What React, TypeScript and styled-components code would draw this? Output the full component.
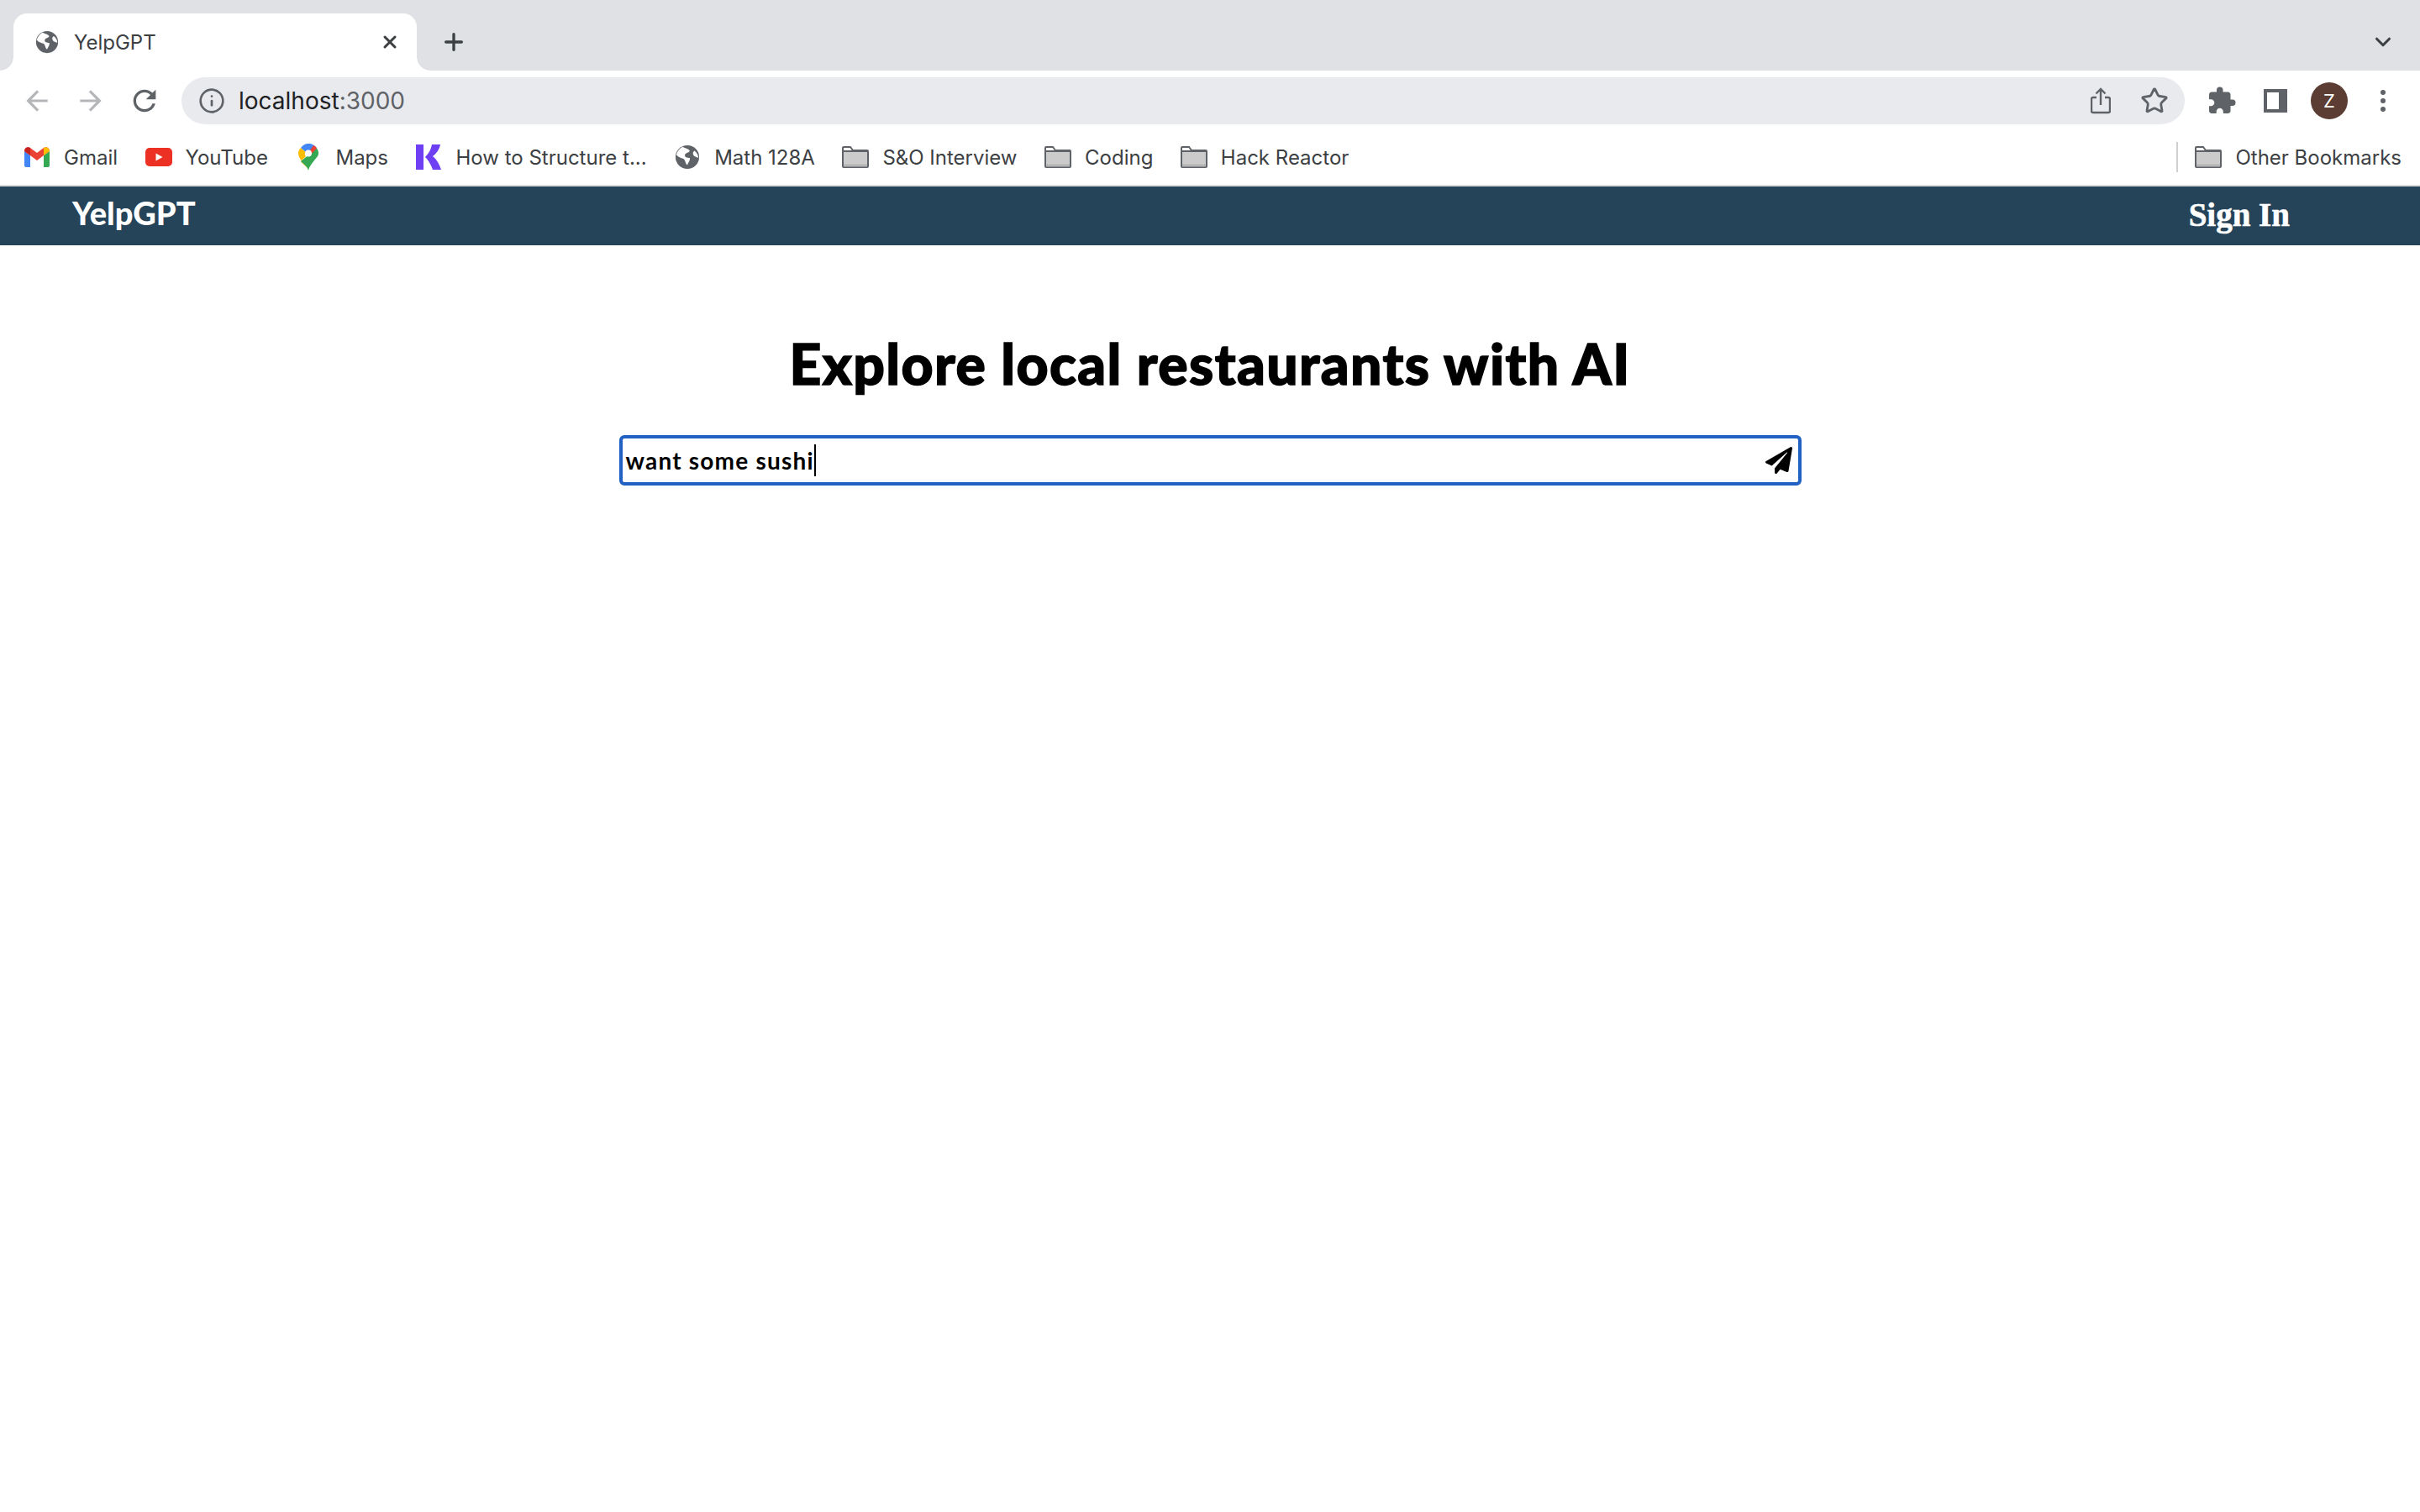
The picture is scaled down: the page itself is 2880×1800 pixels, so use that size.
import React from 'react';
import styled, { createGlobalStyle } from 'styled-components';
import { FaPaperPlane } from 'react-icons/fa';
import { LuInfo, LuStar, LuPlus, LuX, LuChevronDown } from 'react-icons/lu';
import { MdArrowBack, MdArrowForward, MdExtension, MdRefresh } from 'react-icons/md';

const GlobalStyle = createGlobalStyle`
  html, body {
    margin: 0;
    padding: 0;
    background: #ffffff;
  }
`;

const GlobeIcon: React.FC<{ size: number }> = ({ size }) => (
  <svg width={size} height={size} viewBox="0 0 32 32">
    <circle cx="16" cy="16" r="15" fill="#5f6368" />
    <path d="M10 3c3 2 7 2 9 5-1 3-5 2-6 5-1 3 3 4 6 4 1 3-2 6-3 9-3-2-2-6-5-8-3-1-7-2-9-5 1-4 4-8 8-10z" fill="#fff" />
    <path d="M25 8c3 2 5 6 5 9l-5-2c-2-2-3-5 0-7z" fill="#fff" />
  </svg>
);

const GmailIcon = () => (
  <svg width="30" height="24" viewBox="0 0 30 24">
    <path d="M2 24C1 24 0 23 0 22V5l7 5v14z" fill="#4285f4" />
    <path d="M23 24V10l7-5v17c0 1-1 2-2 2z" fill="#34a853" />
    <path d="M0 5c0-4 4-6 7-4l8 6 8-6c3-2 7 0 7 4l-7 5-8 6-8-6z" fill="#ea4335" />
    <path d="M0 5c0-4 4-6 7-4v9z" fill="#c5221f" />
    <path d="M23 1c3-2 7 0 7 4l-7 5z" fill="#fbbc04" />
  </svg>
);

const YouTubeIcon = () => (
  <svg width="32" height="22" viewBox="0 0 32 22">
    <rect width="32" height="22" rx="5" fill="#ed3024" />
    <path d="M12.5 6.5l8 4.5-8 4.5z" fill="#fff" />
  </svg>
);

const MapsIcon = () => (
  <svg width="24" height="32" viewBox="0 0 24 32">
    <path d="M12 32C10 25 0 19 0 11.500 0 9 1 7 3 5l6 5c-2 2-1 4 0 5l-6 6c3 4 7 6 9 11z" fill="#fbbc04" />
    <path d="M12 32c1-5 4-8 7-12 2-3 5-5 5-8.500 0-2-.5-4-2-6L3 21c4 4 8 6 9 11z" fill="#34a853" />
    <path d="M3 5l6 5 6-6-3-4C8 0 5 2 3 5z" fill="#4285f4" />
    <path d="M12 0c4 0 8 2 10 5.500L15 12l-6-8c1-2 2-4 3-4z" fill="#4285f4" />
    <path d="M22 5.500L15 13c1-2 0-4-1-5l4-6c2 1 3 2 4 3.500z" fill="#ea4335" />
    <circle cx="12" cy="11.500" r="4" fill="#fff" />
  </svg>
);

const KIcon = () => (
  <svg width="30" height="30" viewBox="0 0 30 30">
    <path d="M0 0h9v30H0zM19 0h10c-1 6-5 11-9 14 5 4 8 10 10 16H20c-2-6-5-11-9-15 4-4 7-9 8-15z" fill="#6e3ff3" />
  </svg>
);

const FolderIcon = () => (
  <svg width="32" height="26" viewBox="0 0 32 26">
    <path d="M1 24V2c0-.6.4-1 1-1h8l3 4h17c.6 0 1 .4 1 1v18c0 .6-.4 1-1 1H2c-.6 0-1-.4-1-1z" fill="#fff" stroke="#5f6368" strokeWidth="2" />
    <path d="M2 7h28v17H2z" fill="#cbcbcb" />
    <path d="M2 6h28" stroke="#5f6368" strokeWidth="2" />
    <path d="M2 21.500h28v3H2z" fill="#b5b5b5" />
  </svg>
);

const ShareIcon = () => (
  <svg width="24" height="32" viewBox="0 0 24 32" fill="none" stroke="#5f6368" strokeWidth="2.400">
    <path d="M7 12H3a2 2 0 0 0-2 2v14a2 2 0 0 0 2 2h18a2 2 0 0 0 2-2V14a2 2 0 0 0-2-2h-4" />
    <path d="M12 21V2M6.500 7.500L12 2l5.500 5.500" />
  </svg>
);

const SidePanelIcon = () => (
  <svg width="28" height="28" viewBox="0 0 28 28">
    <path fillRule="evenodd" d="M0 0h28v28H0zM4 4v20h14V4z" fill="#5f6368" />
  </svg>
);

const bookmarks: { label: string; icon: React.ReactNode }[] = [
  { label: 'Gmail', icon: <GmailIcon /> },
  { label: 'YouTube', icon: <YouTubeIcon /> },
  { label: 'Maps', icon: <MapsIcon /> },
  { label: 'How to Structure t...', icon: <KIcon /> },
  { label: 'Math 128A', icon: <GlobeIcon size={30} /> },
  { label: 'S&O Interview', icon: <FolderIcon /> },
  { label: 'Coding', icon: <FolderIcon /> },
  { label: 'Hack Reactor', icon: <FolderIcon /> },
];

const App: React.FC = () => (
  <Page>
    <GlobalStyle />
    <TabStrip>
      <Tab>
        <GlobeIcon size={28} />
        <TabTitle>YelpGPT</TabTitle>
        <TabClose>
          <LuX size={24} strokeWidth={3} />
        </TabClose>
      </Tab>
      <NewTab>
        <LuPlus size={32} strokeWidth={2.5} />
      </NewTab>
      <TabListToggle>
        <LuChevronDown size={30} strokeWidth={2.5} />
      </TabListToggle>
    </TabStrip>

    <Toolbar>
      <NavButton $dim>
        <MdArrowBack size={38} />
      </NavButton>
      <NavButton $dim>
        <MdArrowForward size={38} />
      </NavButton>
      <NavButton>
        <MdRefresh size={40} />
      </NavButton>
      <UrlBar>
        <LuInfo size={32} color="#5f6368" />
        <UrlText>
          localhost<UrlPort>:3000</UrlPort>
        </UrlText>
        <UrlActions>
          <ShareIcon />
          <LuStar size={34} color="#5f6368" strokeWidth={2} />
        </UrlActions>
      </UrlBar>
      <ToolbarActions>
        <ActionSlot>
          <MdExtension size={36} color="#5f6368" />
        </ActionSlot>
        <ActionSlot>
          <SidePanelIcon />
        </ActionSlot>
        <ActionSlot>
          <Avatar>Z</Avatar>
        </ActionSlot>
        <ActionSlot>
          <Dots>
            <Dot />
            <Dot />
            <Dot />
          </Dots>
        </ActionSlot>
      </ToolbarActions>
    </Toolbar>

    <BookmarksBar>
      {bookmarks.map((b) => (
        <Bookmark key={b.label}>
          <BookmarkIcon>{b.icon}</BookmarkIcon>
          {b.label}
        </Bookmark>
      ))}
      <OtherBookmarks>
        <Bookmark>
          <BookmarkIcon>
            <FolderIcon />
          </BookmarkIcon>
          Other Bookmarks
        </Bookmark>
      </OtherBookmarks>
    </BookmarksBar>

    <NavBar>
      <Brand>YelpGPT</Brand>
      <SignIn>Sign In</SignIn>
    </NavBar>

    <Main>
      <Heading>Explore local restaurants with AI</Heading>
      <SearchBox>
        <SearchText>want some sushi</SearchText>
        <Caret />
        <SendButton>
          <FaPaperPlane size={32} />
        </SendButton>
      </SearchBox>
    </Main>
  </Page>
);

const Page = styled.div`
  width: 2880px;
  height: 1800px;
  display: flex;
  flex-direction: column;
  overflow: hidden;
  background: #ffffff;
  font-family: Inter, 'Liberation Sans', sans-serif;
`;

const TabStrip = styled.div`
  height: 84px;
  background: #dfe1e5;
  display: flex;
  align-items: flex-end;
  padding-left: 16px;
  padding-right: 29px;
`;

const Tab = styled.div`
  position: relative;
  width: 480px;
  height: 68px;
  box-sizing: border-box;
  padding: 0 20px 0 26px;
  background: #ffffff;
  border-radius: 16px 16px 0 0;
  display: flex;
  align-items: center;
  color: #3c4043;

  &::before,
  &::after {
    content: '';
    position: absolute;
    bottom: 0;
    width: 16px;
    height: 16px;
  }
  &::before {
    left: -16px;
    background: radial-gradient(circle at 0 0, #dfe1e5 15.500px, #ffffff 16px);
  }
  &::after {
    right: -16px;
    background: radial-gradient(circle at 100% 0, #dfe1e5 15.500px, #ffffff 16px);
  }
`;

const TabTitle = styled.span`
  margin-left: 18px;
  flex: 1;
  font-size: 24px;
  color: #3c4043;
`;

const TabClose = styled.span`
  display: flex;
  color: #3c4043;
`;

const NewTab = styled.div`
  margin-left: 28px;
  height: 68px;
  display: flex;
  align-items: center;
  color: #3c4043;
`;

const TabListToggle = styled.div`
  margin-left: auto;
  height: 68px;
  display: flex;
  align-items: center;
  color: #3c4043;
`;

const Toolbar = styled.div`
  height: 64px;
  display: flex;
  align-items: flex-end;
  padding-left: 12px;
  background: #ffffff;
`;

const NavButton = styled.div<{ $dim?: boolean }>`
  width: 64px;
  height: 56px;
  display: flex;
  align-items: center;
  justify-content: center;
  color: ${(p) => (p.$dim ? '#b4b6b9' : '#5f6368')};
`;

const UrlBar = styled.div`
  width: 2384px;
  height: 56px;
  margin-left: 12px;
  box-sizing: border-box;
  padding: 0 19px 0 20px;
  background: #e9eaed;
  border-radius: 28px;
  display: flex;
  align-items: center;
`;

const UrlText = styled.span`
  margin-left: 16px;
  font-size: 28px;
  color: #202124;
`;

const UrlPort = styled.span`
  color: #5f6368;
`;

const UrlActions = styled.div`
  margin-left: auto;
  display: flex;
  align-items: center;
  gap: 35px;
`;

const ToolbarActions = styled.div`
  height: 56px;
  display: flex;
  margin-left: 12px;
`;

const ActionSlot = styled.div`
  width: 64px;
  display: flex;
  align-items: center;
  justify-content: center;
`;

const Avatar = styled.div`
  width: 44px;
  height: 44px;
  border-radius: 50%;
  background: #5b3d33;
  color: #ffffff;
  font-size: 22px;
  display: flex;
  align-items: center;
  justify-content: center;
`;

const Dots = styled.div`
  display: flex;
  flex-direction: column;
  gap: 4px;
`;

const Dot = styled.span`
  width: 6px;
  height: 6px;
  border-radius: 50%;
  background: #5f6368;
`;

const BookmarksBar = styled.div`
  height: 74px;
  box-sizing: border-box;
  padding: 6px 22px 0 28px;
  display: flex;
  align-items: center;
  gap: 32.500px;
  background: #ffffff;
  border-bottom: 2px solid #dadce0;
`;

const Bookmark = styled.div`
  display: flex;
  align-items: center;
  gap: 16px;
  font-size: 24px;
  color: #3c4043;
  white-space: nowrap;
`;

const BookmarkIcon = styled.span`
  width: 32px;
  height: 32px;
  display: flex;
  align-items: center;
  justify-content: center;
`;

const OtherBookmarks = styled.div`
  margin-left: auto;
  height: 36px;
  padding-left: 20px;
  border-left: 2px solid #cfd0d2;
  display: flex;
  align-items: center;
`;

const NavBar = styled.header`
  height: 70px;
  flex: none;
  box-sizing: border-box;
  padding: 0 155px 0 86px;
  background: #264459;
  color: #ffffff;
  display: flex;
  align-items: center;
  justify-content: space-between;
`;

const Brand = styled.div`
  font-family: Lato, sans-serif;
  font-weight: 900;
  font-size: 38px;
  margin-top: -8px;
`;

const SignIn = styled.div`
  font-family: 'Liberation Serif', serif;
  font-weight: 700;
  font-size: 39px;
  margin-top: -3px;
  -webkit-text-stroke: 0.6px #ffffff;
`;

const Main = styled.main`
  display: flex;
  flex-direction: column;
  align-items: center;
  padding-top: 96px;
`;

const Heading = styled.h1`
  margin: 0;
  font-family: Lato, sans-serif;
  font-weight: 900;
  font-size: 66px;
  line-height: 90px;
  letter-spacing: 1.400px;
  color: #000000;
  white-space: nowrap;
  -webkit-text-stroke: 1.500px #000000;
`;

const SearchBox = styled.div`
  width: 1407px;
  height: 60px;
  margin-top: 40px;
  box-sizing: border-box;
  border: 4px solid #2161c4;
  border-radius: 6px;
  padding: 0 4px;
  display: flex;
  align-items: center;
`;

const SearchText = styled.span`
  font-family: Lato, sans-serif;
  font-weight: 700;
  font-size: 28px;
  letter-spacing: 1.200px;
  color: #000000;
`;

const Caret = styled.span`
  width: 2px;
  height: 38px;
  background: #000000;
`;

const SendButton = styled.span`
  margin-left: auto;
  margin-right: 3px;
  display: flex;
  color: #000000;
`;

export default App;
